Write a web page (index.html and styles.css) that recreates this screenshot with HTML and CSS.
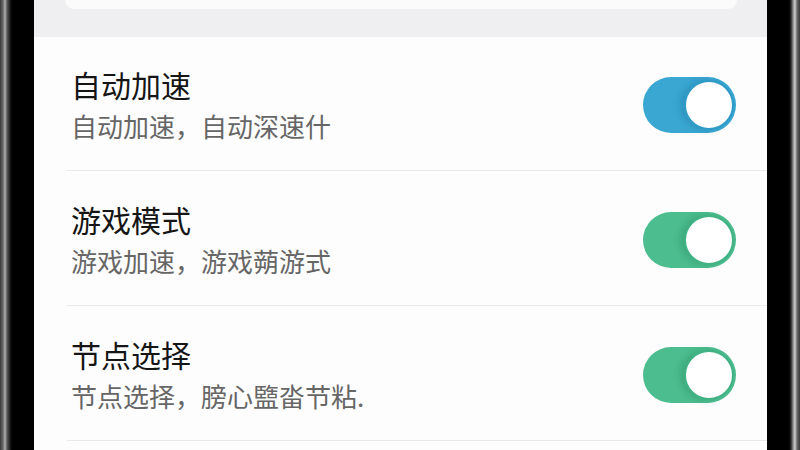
FILE: index.html
```html
<!DOCTYPE html>
<html lang="zh">
<head>
<meta charset="utf-8">
<link rel="stylesheet" href="styles.css">
</head>
<body>
<div class="device">
  <div class="bezel bezel-left"></div>
  <div class="screen">
    <div class="top-band"><div class="top-card"></div></div>
    <div class="list">
      <div class="row">
        <div class="texts">
          <div class="title">自动加速</div>
          <div class="subtitle">自动加速，自动深速什</div>
        </div>
        <div class="toggle toggle-blue"><div class="knob"></div></div>
      </div>
      <div class="row">
        <div class="texts">
          <div class="title">游戏模式</div>
          <div class="subtitle">游戏加速，游戏蒴游式</div>
        </div>
        <div class="toggle toggle-green"><div class="knob"></div></div>
      </div>
      <div class="row">
        <div class="texts">
          <div class="title">节点选择</div>
          <div class="subtitle">节点选择，膀心盬畓节粘.</div>
        </div>
        <div class="toggle toggle-green"><div class="knob"></div></div>
      </div>
    </div>
  </div>
  <div class="bezel bezel-right"></div>
</div>
</body>
</html>
```

FILE: styles.css
```css
html, body {
  margin: 0;
  padding: 0;
  width: 800px;
  height: 450px;
  overflow: hidden;
  background: #000;
  font-family: "Noto Sans CJK SC", "Noto Sans", sans-serif;
}
.device {
  display: flex;
  width: 800px;
  height: 450px;
}
.bezel-left {
  width: 34px;
  flex: none;
  background: linear-gradient(to right, #3a3a3a 0px, #6a6a6a 3px, #b0b0b0 5px, #5a5a5a 7px, #1e1e1e 10px, #000 12px, #000 34px);
}
.bezel-right {
  width: 33px;
  flex: none;
  background: linear-gradient(to right, #000 0px, #000 22px, #2a2a2a 24px, #8a8a8a 26px, #d0d0d0 28px, #6a6a6a 30px, #3a3a3a 33px);
}
.screen {
  flex: 1;
  background: #fdfdfd;
  display: flex;
  flex-direction: column;
}
.top-band {
  height: 37px;
  flex: none;
  background: #efeff2;
  padding: 0 30px 0 31px;
  box-sizing: border-box;
}
.top-card {
  height: 9px;
  background: #fbfbfc;
  border-radius: 0 0 14px 14px;
}
.list {
  display: flex;
  flex-direction: column;
}
.row {
  height: 135px;
  box-sizing: border-box;
  margin-left: 33px;
  padding: 0 31px 0 4px;
  border-bottom: 1px solid #e9e9e9;
  display: flex;
  align-items: center;
  justify-content: space-between;
}
.row:first-child {
  height: 134px;
}
.texts {
  display: flex;
  flex-direction: column;
  gap: 5px;
}
.title {
  font-size: 30px;
  line-height: 40px;
  color: #151515;
}
.subtitle {
  font-size: 26px;
  line-height: 34px;
  color: #666;
}
.toggle {
  width: 93px;
  height: 56px;
  border-radius: 28px;
  position: relative;
  flex: none;
  margin-top: 3px;
}
.toggle-blue {
  background: #39a7d2;
}
.toggle-green {
  background: #4cbd8e;
}
.knob {
  position: absolute;
  right: 2px;
  top: 3px;
  width: 46px;
  height: 46px;
  border-radius: 50%;
  background: #fff;
  border: 2px solid;
}
.toggle-blue .knob {
  border-color: #2f9bc6;
  box-shadow: -4px 0 6px rgba(20, 90, 130, 0.25);
}
.toggle-green .knob {
  border-color: #41b283;
  box-shadow: -4px 0 6px rgba(20, 110, 70, 0.25);
}
```
